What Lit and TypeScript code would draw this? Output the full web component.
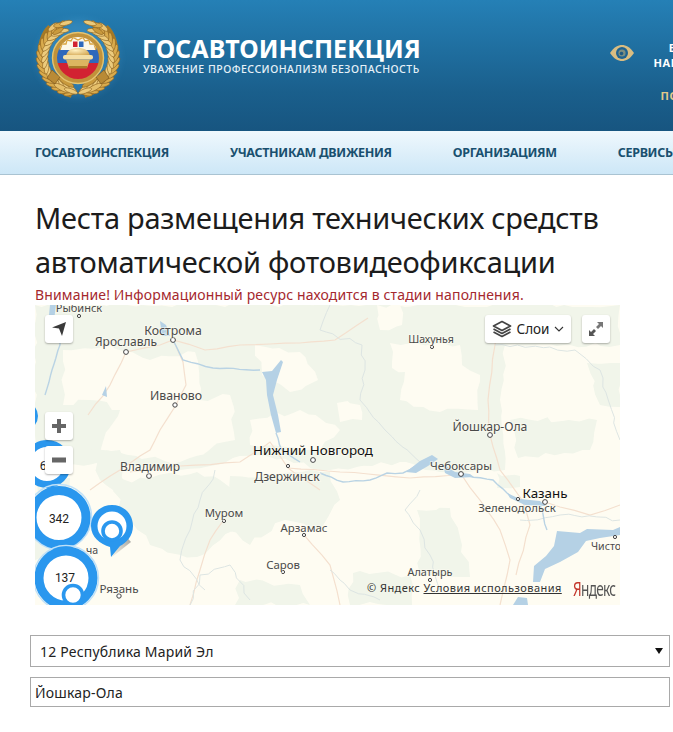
import { LitElement, html, css, svg } from "lit";
import { customElement } from "lit/decorators.js";

let seed = 7;
const rnd = () => {
  seed = (seed * 16807) % 2147483647;
  return seed / 2147483647 - 0.5;
};
/** Turn a coarse outline into the jagged edge of a map region or river. */
const rough = (pts: string, closed: boolean, amp: number, step = 9) => {
  const p = pts.trim().split(/\s+/).map((s) => s.split(",").map(Number));
  const list = closed ? [...p, p[0]] : p;
  let d = `M${p[0][0]} ${p[0][1]}`;
  for (let i = 1; i < list.length; i++) {
    const [ax, ay] = list[i - 1];
    const [bx, by] = list[i];
    const n = Math.max(1, Math.round(Math.hypot(bx - ax, by - ay) / step));
    for (let k = 1; k <= n; k++) {
      const j = k === n ? 0 : amp;
      d += `L${(ax + ((bx - ax) * k) / n + rnd() * j).toFixed(1)} ${(ay + ((by - ay) * k) / n + rnd() * j).toFixed(1)}`;
    }
  }
  return d + (closed ? "Z" : "");
};

const GREEN = "#f1f5ea";
const CREAM = "#fefcf2";
const greenBase = rough("35,305 620,305 620,345 505,345 500,400 505,470 440,472 400,462 330,470 260,455 180,470 100,462 35,470", true, 5);
const creamPatches = [
  "63,350 110,345 150,360 195,352 200,400 230,395 235,440 180,462 100,452 120,410 90,400 63,405",
  "377,305 400,305 402,325 380,330",
  "390,343 460,345 462,365 480,375 478,410 440,412 400,400 405,372 392,368",
  "337,403 360,405 362,420 340,422",
  "250,420 300,410 340,430 320,450 250,445",
  "255,345 300,352 318,380 290,392 262,375",
].map((s) => rough(s, true, 6));
const greenPatches = [
  "90,450 120,450 125,483 113,490 100,480",
  "113,483 197,472 240,490 235,530 197,557 150,545 125,515",
  "230,476 330,472 340,500 320,530 285,520 250,545 225,530",
  "417,510 450,508 462,545 470,577 420,575",
  "353,573 410,575 412,605 350,605",
  "497,473 520,476 520,487 497,488",
  "587,363 620,363 620,407 600,405",
  "510,420 597,420 590,450 518,458",
  "240,580 300,585 310,605 235,605",
  "35,470 70,478 60,560 35,560",
].map((s) => rough(s, true, 6));
const roads = [
  "126,352 160,345 173,340 205,350 240,345 300,343 335,340 368,318",
  "173,340 183,362 186,385 176,405 160,430 150,450 120,470 90,490",
  "126,352 110,385 88,415",
  "288,468 270,442 240,462 180,466 130,472",
  "288,468 320,490",
  "288,468 340,472 410,478 461,474",
  "461,474 480,500 500,530 510,560 500,605",
  "490,435 500,470 522,500 530,525 516,575",
  "490,435 488,400 495,345 497,320",
  "223,521 210,540 200,570 190,605",
  "304,535 330,565 340,605",
  "545,502 590,515 620,505",
].map((s) => rough(s, false, 1.5, 14));
const borders = [
  "330,305 320,330 362,345 365,370 360,400 385,430 420,462",
  "420,490 405,510 420,530 430,555 440,590",
  "495,345 575,350 600,370 620,440",
  "520,520 560,515 620,520",
  "215,470 200,500 190,530 180,560 205,590",
  "190,605 200,575 230,565 250,600",
  "330,570 350,590 380,600",
].map((s) => rough(s, false, 4, 8));
const rivers = [
  "45,395 52,370 60,345 58,325",
  "173,340 183,360 213,368 260,370",
  "276,433 282,450 300,462",
  "320,473 343,482 370,480 387,473 403,473 420,463",
  "460,475 493,480 507,493 517,500 537,503",
  "540,505 547,530",
].map((s) => rough(s, false, 1.5, 7));
const lakes = [
  "M262 372L272 371L281 360L283 362L277 380L273 395L278 415L281 432L276 433L271 415L267 395L266 380Z",
  "M406 472L420 461L432 455L438 459L428 466L416 473Z",
  "M443 464L455 472L470 474L474 477L455 478L445 473Z",
  "M507 493L520 499L540 501L546 506L525 505L510 498Z",
  "M557 531L580 533L587 529L613 530L620 527V535L600 538L586 541L578 552L560 562L545 569L540 582L533 582L534 566L546 556L554 546Z",
  "M513 605L518 597L527 598L528 605Z",
  "M50 305L56 305L54 320L49 315Z",
  "M102 395L106 386L107 397Z",
  "M160 321L166 325L170 336L162 336Z",
];
const cities: [number, number, number, string, string?][] = [
  [79, 312, 11, "Рыбинск"],
  [173, 335, 12.3, "Кострома"],
  [126, 346, 12, "Ярославль"],
  [176, 400, 12.3, "Иваново"],
  [150, 471, 12, "Владимир"],
  [313, 455, 13.4, "Нижний Новгород", "#111"],
  [287, 481, 12.2, "Дзержинск"],
  [224, 517, 11.4, "Муром"],
  [304, 532, 11.4, "Арзамас"],
  [283, 569, 11.4, "Саров"],
  [431, 343, 10.6, "Шахунья"],
  [490, 431, 12.2, "Йошкар-Ола"],
  [461, 470, 11.6, "Чебоксары"],
  [545, 498, 13.4, "Казань", "#111"],
  [517, 512, 11.4, "Зеленодольск"],
  [430, 576, 10.8, "Алатырь"],
  [119, 593, 11.6, "Рязань"],
  [606, 550, 10.6, "Чисто"],
  [92, 554, 10.6, "ча"],
];
const dots: [number, number, number][] = [
  [79, 316, 1.6], [173, 340, 2.4], [126, 352, 2.4], [175, 405, 2.2], [149, 476, 2.4], [288, 466, 1.6],
  [313, 460, 2.4], [224, 521, 1.6], [304, 535, 1.6], [283, 572, 1.6], [432, 347, 1.6], [490, 435, 2.4],
  [461, 474, 2.4], [518, 499, 1.6], [545, 502, 2.4], [430, 580, 1.6], [119, 596, 2.2], [615, 537, 1.6],
];
const leafAngles = Array.from({ length: 15 }, (_, i) => 102 + i * 10);

@customElement("app-root")
export class AppRoot extends LitElement {
  static styles = css`
    :host { display: block; width: 673px; height: 732px; overflow: hidden; background: #fff; font-family: "Noto Sans", "Open Sans", sans-serif; position: relative; }
    .top { height: 131px; background: linear-gradient(#2580b6, #1a5f8c 70%, #175580); display: flex; align-items: flex-start; white-space: nowrap; }
    .emblem { width: 100px; height: 90px; margin: 14px 0 0 30px; flex: none; }
    .brand { margin: 34px 0 0 12px; width: 278px; flex: none; color: #fff; }
    .brand h2 { margin: 0; font: 700 25px/28px "Noto Sans", sans-serif; letter-spacing: .05px; }
    .brand div { font: 500 10.5px/13px "Noto Sans", sans-serif; letter-spacing: .5px; color: #e6f1f8; margin: 1px 0 0 1px; }
    .eye { width: 24px; height: 18px; margin: 44px 0 0 190px; flex: none; }
    .vis { margin: 40px 0 0 8px; width: 100px; flex: none; text-align: center; color: #fff; font: 700 11px/15px "Noto Sans", sans-serif; letter-spacing: .5px; }
    .vis span { display: block; margin-top: 18px; color: #e2c98a; }
    nav { height: 43px; background: linear-gradient(#eff8fd, #cde7f7); border-bottom: 1px solid #a9c3d2; display: flex; gap: 61px; padding-left: 35px; align-items: center; white-space: nowrap; }
    nav a { color: #19506f; font: 700 12.5px/16px "Noto Sans", sans-serif; letter-spacing: -.32px; }
    main { padding: 21px 0 0 35px; }
    h1 { margin: 0; font: 400 29px/44px "Noto Sans", sans-serif; color: #1c1c1c; letter-spacing: -.28px; white-space: nowrap; }
    .warn { color: #a5282e; font-size: 14px; line-height: 17px; letter-spacing: .15px; white-space: nowrap; margin-top: 2px; }
    .map { position: relative; width: 585px; height: 300px; overflow: hidden; background: #fefcf2; margin-top: 2px; }
    .map > svg { display: block; }
    .btn { position: absolute; background: #fff; border-radius: 3px; box-shadow: 0 1px 2px rgba(0,0,0,.3); display: flex; align-items: center; justify-content: center; }
    .nav-b { left: 10px; top: 10px; width: 28px; height: 28px; }
    .plus { left: 10px; top: 107px; width: 28px; height: 28px; }
    .minus { left: 10px; top: 141px; width: 28px; height: 28px; }
    .layers { left: 450px; top: 10px; width: 86px; height: 28px; gap: 5px; font: 400 13.5px "Noto Sans", sans-serif; color: #222; }
    .full { left: 547px; top: 10px; width: 28px; height: 28px; }
    .copy { position: absolute; left: 332px; top: 276px; font: 400 11px/14px "Noto Sans", sans-serif; letter-spacing: .45px; color: #333; white-space: nowrap; }
    .ya { position: absolute; left: 538px; top: 272px; font: 400 20px/24px "Noto Sans", sans-serif; letter-spacing: -1px; color: #555; transform: scaleX(.68); transform-origin: left; white-space: nowrap; }
    .ya b { font-weight: 400; color: #c4372c; }
    form { padding: 30px 3px 0 30px; display: flex; flex-direction: column; gap: 10px; }
    .sel, .inp { border: 1px solid #a9a9a9; box-sizing: border-box; font: 400 14px "Noto Sans", sans-serif; color: #222; display: flex; align-items: center; background: #fff; letter-spacing: .2px; }
    .sel { height: 32px; padding: 0 6px 0 9px; justify-content: space-between; }
    .inp { height: 30px; padding-left: 4px; }
    .caret { width: 0; height: 0; border: 4px solid transparent; border-top: 6px solid #111; border-bottom: 0; }
  `;

  branch() {
    const rows = leafAngles.map((deg) => {
      const a = (deg * Math.PI) / 180;
      const x = 78 + 33 * Math.cos(a);
      const y = 58 + 31 * Math.sin(a);
      const ox = 78 + 38 * Math.cos(a);
      const oy = 58 + 36 * Math.sin(a);
      const rot = deg + 90;
      return svg`
        <ellipse cx=${ox} cy=${oy} rx="6.5" ry="2.2" fill="#d9ab4d" stroke="#8e631f" stroke-width=".6" transform="rotate(${rot - 28} ${ox} ${oy})"/>
        <ellipse cx=${x} cy=${y} rx="6.5" ry="2.2" fill="#eccb7c" stroke="#8e631f" stroke-width=".6" transform="rotate(${rot + 24} ${x} ${y})"/>`;
    });
    return svg`
      <path d="M72 94C58 90 45 78 42 60C40 46 45 33 51 28" fill="none" stroke="#a67a28" stroke-width="8"/>
      ${rows}
      <g stroke="#8e631f" stroke-width=".6">
        <ellipse cx="53" cy="27" rx="6" ry="2.4" fill="#e9c574" transform="rotate(-40 53 27)"/>
        <ellipse cx="60" cy="25" rx="6.5" ry="2.4" fill="#d9ab4d" transform="rotate(-10 60 25)"/>
        <ellipse cx="66" cy="23" rx="6.5" ry="2.2" fill="#ecca7a" transform="rotate(-14 66 23)"/>
        <ellipse cx="58" cy="31" rx="6" ry="2.2" fill="#c99a3d" transform="rotate(-30 58 31)"/>
        <ellipse cx="62" cy="88" rx="9" ry="2.6" fill="#e5bf6b" transform="rotate(28 62 88)"/>
        <ellipse cx="66" cy="82" rx="9" ry="2.6" fill="#c99a3d" transform="rotate(32 66 82)"/>
        <ellipse cx="71" cy="91" rx="7" ry="2.2" fill="#ecca7a" transform="rotate(20 71 91)"/>
      </g>
      <path d="M52 70L60 77L55 84L47 78Z" fill="#b98a35" stroke="#7f581b" stroke-width=".7"/>`;
  }

  emblem() {
    return html`<svg class="emblem" viewBox="30 14 100 90">
      <defs>
        <clipPath id="disc"><circle cx="78" cy="58" r="21"/></clipPath>
        <filter id="soft" x="-10%" y="-10%" width="120%" height="120%"><feGaussianBlur stdDeviation=".35"/></filter>
        <filter id="glow" x="-30%" y="-30%" width="160%" height="160%"><feGaussianBlur stdDeviation="4"/></filter>
        <radialGradient id="dome" cx=".4" cy=".3" r=".8"><stop offset="0" stop-color="#fff0c0"/><stop offset="1" stop-color="#cf9f47"/></radialGradient>
      </defs>
      <ellipse cx="78" cy="58" rx="40" ry="38" fill="#4ba0d6" opacity=".4" filter="url(#glow)"/>
      <g filter="url(#soft)">
        ${this.branch()}
        <g transform="translate(156 0) scale(-1 1)">${this.branch()}</g>
        <circle cx="78" cy="58" r="25.5" fill="#c1923a" stroke="#e5c471" stroke-width="1.4"/>
        <g clip-path="url(#disc)">
          <rect x="55" y="36" width="46" height="13" fill="#fbf7ea"/>
          <rect x="55" y="48" width="46" height="15" fill="#2f67bc"/>
          <rect x="55" y="63" width="46" height="17" fill="#d22431"/>
          <path d="M60 50L62 44L66 44L67 40L71 41L73 37.5L78 40L83 37.5L85 41L89 40L90 44L94 44L96 50" fill="#fbf7ea" stroke="#d9a441" stroke-width="1.3"/>
          <rect x="73" y="41.5" width="4.5" height="5.5" fill="#d22431"/>
          <rect x="79" y="41.5" width="4.5" height="5.5" fill="#2f67bc"/>
        </g>
        <path d="M66 56C67 50 72 48 78 48C84 48 89 50 90 56Z" fill="url(#dome)"/>
        <rect x="63" y="55" width="30" height="4.5" rx="2" fill="#f4dfa6"/>
        <path d="M66 59.5H90L87 68H69Z" fill="#dcb561"/>
        <rect x="69" y="66" width="18" height="2.5" fill="#a97c2b"/>
      </g>
    </svg>`;
  }

  mapSvg() {
    const font = "Noto Sans, sans-serif";
    return svg`<svg width="585" height="300" viewBox="35 305 585 300">
      <defs>
        <linearGradient id="tail" x1="0" y1="1" x2="1" y2="0"><stop offset="0" stop-color="#8a8a80" stop-opacity=".1"/><stop offset="1" stop-color="#777" stop-opacity=".75"/></linearGradient>
        <filter id="base" x="0" y="0" width="100%" height="100%"><feGaussianBlur stdDeviation=".7"/></filter>
      </defs>
      <g filter="url(#base)">
        <path d=${greenBase} fill=${GREEN}/>
        ${creamPatches.map((d) => svg`<path d=${d} fill=${CREAM}/>`)}
        ${greenPatches.map((d) => svg`<path d=${d} fill=${GREEN}/>`)}
        ${roads.map((d) => svg`<path d=${d} fill="none" stroke="#f4e0cf" stroke-width="1.2"/>`)}
        ${borders.map((d) => svg`<path d=${d} fill="none" stroke="#dde5e3" stroke-width="1"/>`)}
        ${rivers.map((d) => svg`<path d=${d} fill="none" stroke="#b9d3e4" stroke-width="1.4"/>`)}
        ${lakes.map((d) => svg`<path d=${d} fill="#b5d1e5"/>`)}
      </g>
      ${dots.map(([x, y, r]) => svg`<circle cx=${x} cy=${y} r=${r} fill="#fff" stroke="#444" stroke-width="1"/>`)}
      ${cities.map(([x, y, s, t, c]) => svg`<text x=${x} y=${y} font-size=${s} text-anchor="middle" fill=${c || "#4a4a4a"} stroke=${CREAM} stroke-width="2" stroke-opacity=".5" paint-order="stroke" font-family=${font}>${t}</text>`)}

      <circle cx="24" cy="416" r="14" fill="#2a97ee"/>
      <circle cx="47" cy="464" r="20.5" fill="#fff" stroke="#2a97ee" stroke-width="7"/>
      <text x="43" y="470" font-size="12" text-anchor="middle" fill="#222" font-family="Roboto, sans-serif">6</text>
      <circle cx="59" cy="517" r="32.5" fill="none" stroke="#bfe0f8" stroke-width="1.6"/>
      <circle cx="59" cy="517.5" r="27" fill="#fff" stroke="#2a97ee" stroke-width="9"/>
      <text x="59" y="523" font-size="12" text-anchor="middle" fill="#222" font-family="Roboto, sans-serif">342</text>
      <path d="M112 557L131 542L122 532Z" fill="url(#tail)"/>
      <path d="M112 505C124 505 133 514 133 526C133 536 126 543 120 546L111 557L110 547C100 544 91 537 91 526C91 514 100 505 112 505Z" fill="#2a97ee"/>
      <circle cx="112" cy="526" r="14.5" fill="#fff"/>
      <circle cx="112" cy="531" r="9" fill="#fff" stroke="#2a97ee" stroke-width="3.6"/>
      <circle cx="66" cy="578" r="32.5" fill="none" stroke="#bfe0f8" stroke-width="1.4"/>
      <circle cx="66" cy="578" r="27" fill="#fff" stroke="#2a97ee" stroke-width="9"/>
      <text x="65" y="582" font-size="12" text-anchor="middle" fill="#222" font-family="Roboto, sans-serif">137</text>
      <circle cx="73" cy="595" r="9.5" fill="#fff" stroke="#2a97ee" stroke-width="3.6"/>
    </svg>`;
  }

  render() {
    return html`
      <div class="top">
        ${this.emblem()}
        <div class="brand">
          <h2>ГОСАВТОИНСПЕКЦИЯ</h2>
          <div>УВАЖЕНИЕ ПРОФЕССИОНАЛИЗМ БЕЗОПАСНОСТЬ</div>
        </div>
        <svg class="eye" viewBox="0 0 24 18">
          <path d="M0 9C4 3 8 1 12 1C16 1 20 3 24 9C20 15 16 17 12 17C8 17 4 15 0 9Z" fill="#d9bd82"/>
          <circle cx="12" cy="9" r="6" fill="#1f6391"/>
          <circle cx="12" cy="9" r="3.6" fill="#7d8e80"/>
          <circle cx="11.5" cy="9.5" r="1.8" fill="#1f5a83"/>
        </svg>
        <div class="vis">ВЕРСИЯ<br />НАРУШЕНИЯ<span>ПОКАЗАТЬ</span></div>
      </div>
      <nav>
        <a>ГОСАВТОИНСПЕКЦИЯ</a><a>УЧАСТНИКАМ ДВИЖЕНИЯ</a><a>ОРГАНИЗАЦИЯМ</a><a>СЕРВИСЫ</a>
      </nav>
      <main>
        <h1>Места размещения технических средств<br />автоматической фотовидеофиксации</h1>
        <div class="warn">Внимание! Информационный ресурс находится в стадии наполнения.</div>
        <div class="map">
          ${this.mapSvg()}
          <div class="btn nav-b"><svg width="16" height="16" viewBox="0 0 16 16"><path d="M15 1L1 6.5L8 7.5L11 15Z" fill="#3a3a3a"/></svg></div>
          <div class="btn plus"><svg width="16" height="16" viewBox="0 0 16 16"><path d="M1 6H6V1H10V6H15V10H10V15H6V10H1Z" fill="#666"/></svg></div>
          <div class="btn minus"><svg width="16" height="16" viewBox="0 0 16 16"><rect x="1" y="5.5" width="14" height="5" fill="#666"/></svg></div>
          <div class="btn layers">
            <svg width="20" height="18" viewBox="0 0 20 18"><path d="M10 1.5L18.5 6L10 10.5L1.5 6Z M1.5 9L10 13.5L18.5 9 M1.5 12L10 16.5L18.5 12" fill="none" stroke="#444" stroke-width="1.7" stroke-linejoin="round"/></svg>
            <span>Слои</span>
            <svg width="10" height="6" viewBox="0 0 10 6"><path d="M1 1L5 5L9 1" fill="none" stroke="#333" stroke-width="1.1"/></svg>
          </div>
          <div class="btn full"><svg width="16" height="16" viewBox="0 0 16 16"><path d="M15 1V7L13 5L10 8L8 6L11 3L9 1Z" fill="#777"/><path d="M1 15V9L3 11L6 8L8 10L5 13L7 15Z" fill="#555"/></svg></div>
          <div class="copy">© Яндекс <u>Условия использования</u></div>
          <div class="ya"><b>Я</b>ндекс</div>
        </div>
      </main>
      <form>
        <div class="sel"><span>12 Республика Марий Эл</span><i class="caret"></i></div>
        <div class="inp">Йошкар-Ола</div>
      </form>
    `;
  }
}
